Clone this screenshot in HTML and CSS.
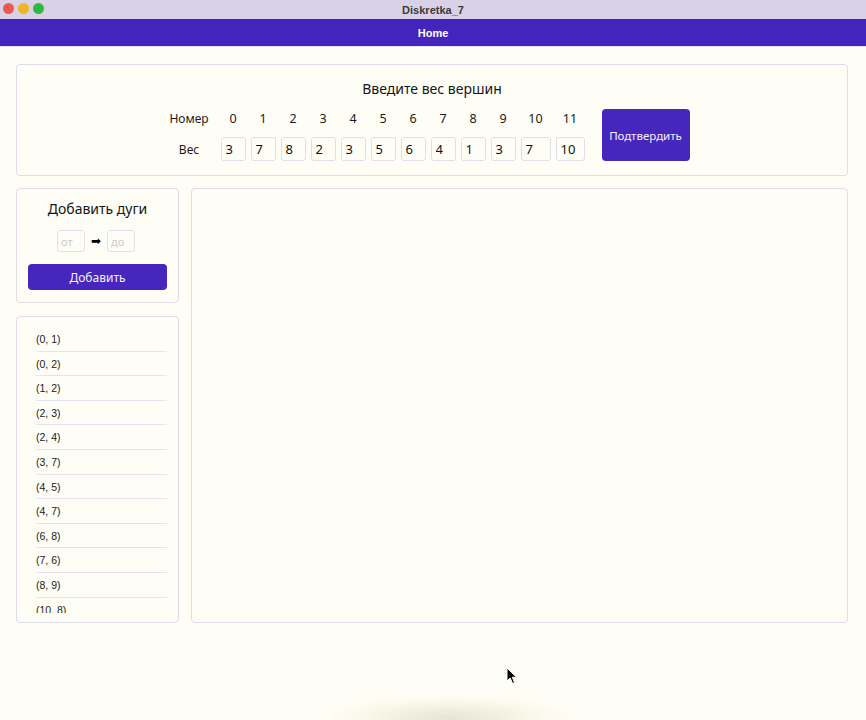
FILE: index.html
```html
<!DOCTYPE html>
<html lang="ru">
<head>
<meta charset="utf-8">
<title>Diskretka_7</title>
<link rel="stylesheet" href="styles.css">
</head>
<body>
<div class="window">
  <div class="titlebar">
    <div class="lights">
      <span class="light red"></span>
      <span class="light yellow"></span>
      <span class="light green"></span>
    </div>
    <div class="wtitle">Diskretka_7</div>
  </div>
  <nav class="navbar">Home</nav>
  <main class="content">
    <section class="card weights">
      <h2 class="card-title">Введите вес вершин</h2>
      <div class="weights-body">
        <div class="wgrid">
          <div class="lbl">Номер</div>
          <div class="num">0</div><div class="num">1</div><div class="num">2</div><div class="num">3</div>
          <div class="num">4</div><div class="num">5</div><div class="num">6</div><div class="num">7</div>
          <div class="num">8</div><div class="num">9</div><div class="num">10</div><div class="num">11</div>
          <div class="lbl">Вес</div>
          <input class="winput" value="3"><input class="winput" value="7"><input class="winput" value="8"><input class="winput" value="2">
          <input class="winput" value="3"><input class="winput" value="5"><input class="winput" value="6"><input class="winput" value="4">
          <input class="winput" value="1"><input class="winput" value="3"><input class="winput" value="7"><input class="winput" value="10">
        </div>
        <button class="btn confirm">Подтвердить</button>
      </div>
    </section>
    <div class="lower">
      <div class="side">
        <section class="card add">
          <h2 class="card-title">Добавить дуги</h2>
          <div class="arc-row">
            <input class="arc-input" placeholder="от">
            <span class="arrow">➡</span>
            <input class="arc-input" placeholder="до">
          </div>
          <button class="btn add-btn">Добавить</button>
        </section>
        <section class="card edges">
          <ul class="edge-list">
            <li>(0, 1)</li><li>(0, 2)</li><li>(1, 2)</li><li>(2, 3)</li>
            <li>(2, 4)</li><li>(3, 7)</li><li>(4, 5)</li><li>(4, 7)</li>
            <li>(6, 8)</li><li>(7, 6)</li><li>(8, 9)</li><li>(10, 8)</li>
          </ul>
        </section>
      </div>
      <section class="card canvas"></section>
    </div>
  </main>
  <div class="dock-glow"></div>
  <svg class="cursor" width="12" height="18" viewBox="0 0 12 18">
    <path d="M1 1 L1 14 L4.2 11 L6.6 16.5 L8.6 15.6 L6.3 10.2 L10.5 10.2 Z" fill="#000" stroke="#fff" stroke-width="1"/>
  </svg>
</div>
</body>
</html>
```

FILE: styles.css
```css
* { box-sizing: border-box; }
html, body { margin: 0; padding: 0; }
body {
  width: 866px;
  height: 720px;
  overflow: hidden;
  background: #fefef6;
  font-family: "Noto Sans", "Open Sans", sans-serif;
  color: #1a1a1a;
}
.window {
  position: relative;
  width: 866px;
  height: 720px;
  display: flex;
  flex-direction: column;
  background: #fefef6;
}
.titlebar {
  height: 19px;
  background: #d9d2e6;
  display: flex;
  align-items: center;
  justify-content: center;
  position: relative;
  flex: none;
}
.lights {
  position: absolute;
  left: 3px;
  top: 3px;
  display: flex;
  gap: 4px;
}
.light {
  width: 11px;
  height: 11px;
  border-radius: 50%;
  display: block;
}
.red { background: #ec5b52; }
.yellow { background: #f0b32c; }
.green { background: #2fba3e; }
.wtitle {
  font-family: "Liberation Sans", Arial, sans-serif;
  font-weight: bold;
  font-size: 11px;
  color: #3a3a3a;
}
.navbar {
  flex: none;
  height: 28px;
  background: #4424bd;
  color: #fff;
  font-family: "Liberation Sans", Arial, sans-serif;
  font-weight: bold;
  font-size: 11px;
  display: flex;
  align-items: center;
  justify-content: center;
  border-bottom: 1px solid #e8e4f4;
}
.content {
  padding: 17px 18px 0 16px;
  display: flex;
  flex-direction: column;
  gap: 12px;
}
.card {
  border: 1px solid #dedce4;
  border-radius: 4px;
  background: transparent;
}
.card-title {
  margin: 0;
  font-weight: normal;
  font-size: 14px;
  line-height: 20px;
  text-align: center;
  color: #151515;
}
.weights {
  height: 112px;
  padding: 14px 0 0;
}
.weights-body {
  margin-top: 10px;
  display: flex;
  justify-content: center;
  align-items: center;
  gap: 17px;
}
.wgrid {
  display: grid;
  grid-template-columns: 47px repeat(10, 25px) 30px 29px;
  grid-template-rows: 18px 24px;
  column-gap: 5px;
  row-gap: 10px;
  align-items: center;
  margin-left: -6px;
}
.lbl {
  font-size: 12px;
  text-align: center;
  padding-right: 6px;
  color: #1a1a1a;
}
.num {
  font-size: 12.5px;
  text-align: center;
  color: #1a1a1a;
}
.winput {
  width: 100%;
  height: 24px;
  border: 1px solid #e0dee8;
  border-radius: 3px;
  background: transparent;
  font-family: "Noto Sans", sans-serif;
  font-size: 13px;
  color: #111;
  padding: 0 0 0 4px;
  outline: none;
}
.btn {
  border: none;
  border-radius: 4px;
  background: #4626bc;
  color: #f4f0ff;
  font-family: "Noto Sans", sans-serif;
  font-size: 12px;
  cursor: pointer;
}
.confirm {
  width: 88px;
  height: 52px;
  padding: 0;
  font-size: 11.5px;
}
.lower {
  display: flex;
  gap: 12px;
  height: 435px;
}
.side {
  width: 163px;
  flex: none;
  display: flex;
  flex-direction: column;
  gap: 13px;
}
.add {
  height: 115px;
  padding: 10px 11px 0;
}
.arc-row {
  margin-top: 11px;
  display: flex;
  justify-content: center;
  align-items: center;
  gap: 6px;
  margin-left: -3px;
}
.arc-input {
  width: 28px;
  height: 22px;
  border: 1px solid #e2e0e8;
  border-radius: 3px;
  background: transparent;
  font-family: "Noto Sans", sans-serif;
  font-size: 11px;
  padding: 0 0 0 3px;
  outline: none;
}
.arc-input::placeholder { color: #c9c9cc; }
.arrow {
  font-size: 12px;
  color: #000;
  line-height: 1;
  font-family: "DejaVu Sans", sans-serif;
}
.add-btn {
  margin-top: 12px;
  width: 100%;
  height: 26px;
  font-size: 12px;
}
.edges {
  flex: 1;
  padding: 10px 11px 9px 19px;
  min-height: 0;
  display: flex;
}
.edge-list {
  list-style: none;
  margin: 0;
  padding: 0;
  overflow: hidden;
  flex: 1;
}
.edge-list li {
  height: 24.6px;
  line-height: 24.6px;
  border-bottom: 1px solid #e6e4ee;
  font-family: "Liberation Sans", Arial, sans-serif;
  font-size: 10.5px;
  color: #1a1a1a;
}
.canvas {
  flex: 1;
}
.dock-glow {
  position: absolute;
  left: 330px;
  bottom: -20px;
  width: 240px;
  height: 44px;
  background: radial-gradient(ellipse at center, rgba(205,205,175,0.5) 0%, rgba(230,228,190,0.22) 50%, rgba(255,255,255,0) 75%);
  pointer-events: none;
}
.cursor {
  position: absolute;
  left: 506px;
  top: 667px;
}
```
